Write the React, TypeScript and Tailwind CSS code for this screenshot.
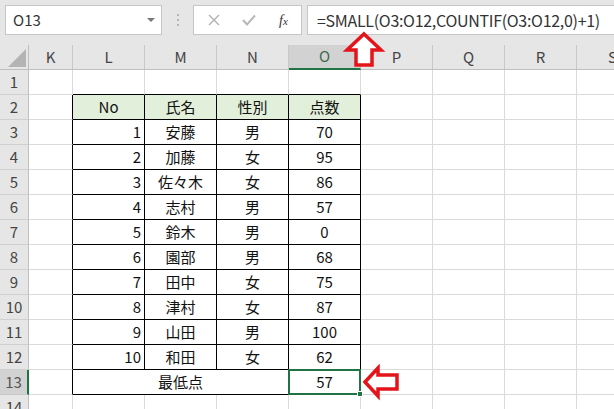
import React from "react";

const COLS = ["K", "L", "M", "N", "O", "P", "Q", "R", "S"];
const GRID = "grid grid-cols-[29px_44px_72px_72px_72px_72px_72px_72px_72px_72px]";

const DATA: [number, string, string, number][] = [
  [1, "安藤", "男", 70],
  [2, "加藤", "女", 95],
  [3, "佐々木", "女", 86],
  [4, "志村", "男", 57],
  [5, "鈴木", "男", 0],
  [6, "園部", "男", 68],
  [7, "田中", "女", 75],
  [8, "津村", "女", 87],
  [9, "山田", "男", 100],
  [10, "和田", "女", 62],
];

function borderCls(r: number, ci: number) {
  const rightBlack = r >= 2 && r <= 13 && ci >= 0 && ci <= 4;
  const bottomBlack = r >= 1 && r <= 13 && ci >= 1 && ci <= 4;
  return (
    "border-r border-b " +
    (rightBlack ? "border-r-black " : "border-r-[#dadada] ") +
    (bottomBlack ? "border-b-black" : "border-b-[#dadada]")
  );
}

function RowHeader({ n, sel }: { n: number; sel?: boolean }) {
  return (
    <div
      className={
        sel
          ? "flex items-center justify-center bg-[#d2d2d2] border-r-2 border-r-[#217346] border-b border-b-[#c8c8c8] text-[#555] text-[15px]"
          : "flex items-center justify-center bg-[#e6e6e6] border-r border-r-[#bfbfbf] border-b border-b-[#d0d0d0] text-[#444] text-[15px]"
      }
    >
      {n}
    </div>
  );
}

function Row({ r, cells }: { r: number; cells: (React.ReactNode | null)[] }) {
  return (
    <div className={GRID + " h-[25px]"}>
      <RowHeader n={r} />
      {COLS.map((c, ci) => (
        <div key={c} className={borderCls(r, ci) + " flex items-center text-[15px] text-[#111] overflow-hidden"}>
          {cells[ci] ?? null}
        </div>
      ))}
    </div>
  );
}

export default function App() {
  return (
    <div
      className="relative w-[614px] h-[409px] overflow-hidden bg-white"
      style={{ fontFamily: '"Noto Sans CJK JP", "Noto Sans", sans-serif' }}
    >
      {/* formula bar */}
      <div className="h-[45px] bg-[#e6e6e6] flex items-start pt-[5px] pl-[5px]">
        <div className="shrink-0 w-[157px] h-[30px] bg-white border border-[#c6c6c6] flex items-center justify-between pl-[7px] pr-[6px] text-[15px] text-[#333]">
          <span>O13</span>
          <svg width="8" height="5" viewBox="0 0 8 5">
            <polygon points="0,0 8,0 4,4" fill="#777" />
          </svg>
        </div>
        <div className="shrink-0 w-[31px] h-[30px] flex flex-col items-center justify-center gap-[3px]">
          <span className="w-[2px] h-[2px] bg-[#b5b5b5]" />
          <span className="w-[2px] h-[2px] bg-[#b5b5b5]" />
          <span className="w-[2px] h-[2px] bg-[#b5b5b5]" />
        </div>
        <div className="shrink-0 w-[109px] h-[30px] bg-white border border-[#c6c6c6] flex items-center pl-[2px]">
          <span className="w-[36px] flex justify-center">
            <svg width="12" height="12" viewBox="0 0 12 12">
              <path d="M1 1 L11 11 M11 1 L1 11" stroke="#b0b0b0" strokeWidth="1.4" />
            </svg>
          </span>
          <span className="w-[36px] flex justify-center">
            <svg width="14" height="12" viewBox="0 0 14 12">
              <path d="M1 6 L5 10.5 L13 1.5" stroke="#b8b8b8" strokeWidth="2" fill="none" />
            </svg>
          </span>
          <span
            className="w-[36px] flex justify-center italic text-[14px] text-[#333]"
            style={{ fontFamily: '"Liberation Serif", serif' }}
          >
            f<span className="text-[11px] mt-[3px]">x</span>
          </span>
        </div>
        <div className="ml-[5px] min-w-0 flex-1 h-[30px] bg-white border border-r-0 border-[#c6c6c6] flex items-center pl-[9px] text-[16px] tracking-[-0.3px] text-[#333] whitespace-nowrap overflow-hidden">
          =SMALL(O3:O12,COUNTIF(O3:O12,0)+1)
        </div>
      </div>

      {/* column headers */}
      <div className={GRID + " h-[25px] bg-[#e6e6e6]"}>
        <div className="relative border-r border-r-[#bfbfbf] border-b border-b-[#bfbfbf]">
          <svg className="absolute left-[8px] top-[4px]" width="18" height="18" viewBox="0 0 18 18">
            <polygon points="18,0 18,18 0,18" fill="#b4b4b4" />
          </svg>
        </div>
        {COLS.map((c) =>
          c === "O" ? (
            <div
              key={c}
              className="flex items-center justify-center bg-[#d2d2d2] border-r border-r-[#bfbfbf] border-b-2 border-b-[#217346] text-[15px] text-[#3d6b4f]"
            >
              {c}
            </div>
          ) : (
            <div
              key={c}
              className="flex items-center justify-center border-r border-r-[#c8c8c8] border-b border-b-[#bfbfbf] text-[15px] text-[#444]"
            >
              {c}
            </div>
          )
        )}
      </div>

      {/* rows */}
      <Row r={1} cells={[]} />
      <div className={GRID + " h-[25px]"}>
        <RowHeader n={2} />
        {COLS.map((c, ci) => {
          const labels: Record<string, string> = { L: "No", M: "氏名", N: "性別", O: "点数" };
          const lab = labels[c];
          return (
            <div
              key={c}
              className={
                borderCls(2, ci) +
                (lab ? " bg-[#e2efda]" : "") +
                " flex items-center justify-center text-[15px] text-[#111]"
              }
            >
              {lab ?? null}
            </div>
          );
        })}
      </div>
      {DATA.map(([no, name, sex, score], i) => (
        <Row
          key={no}
          r={i + 3}
          cells={[
            null,
            <span className="w-full text-right pr-[3px]">{no}</span>,
            <span className="w-full text-center">{name}</span>,
            <span className="w-full text-center">{sex}</span>,
            <span className="w-full text-center">{score}</span>,
          ]}
        />
      ))}
      {/* row 13 */}
      <div className="grid grid-cols-[29px_44px_216px_72px_72px_72px_72px_72px] h-[25px]">
        <RowHeader n={13} sel />
        <div className="border-r border-b border-r-black border-b-[#dadada]" />
        <div className="border-r border-b border-r-black border-b-black flex items-center justify-center text-[15px] text-[#111]">
          最低点
        </div>
        <div className="relative border-r border-b border-r-black border-b-black flex items-center justify-center text-[15px] text-[#111]">
          57
          <div className="absolute -left-[1px] -top-[1px] -right-[1px] -bottom-[1px] border-2 border-[#217346]" />
          <div className="absolute -right-[3px] -bottom-[3px] w-[6px] h-[6px] bg-[#217346] border border-white" />
        </div>
        <div className="border-r border-b border-r-[#dadada] border-b-[#dadada]" />
        <div className="border-r border-b border-r-[#dadada] border-b-[#dadada]" />
        <div className="border-r border-b border-r-[#dadada] border-b-[#dadada]" />
        <div className="border-r border-b border-r-[#dadada] border-b-[#dadada]" />
      </div>
      <Row r={14} cells={[]} />

      {/* annotation arrows */}
      <svg className="absolute inset-0 pointer-events-none" width="614" height="409" viewBox="0 0 614 409">
        <polygon
          points="364,34 381,50 372,50 372,65 356,65 356,50 347,50"
          fill="white"
          stroke="#e4141b"
          strokeWidth="3.5"
          strokeLinejoin="miter"
        />
        <polygon
          points="365,382 378,368 378,375 397,375 397,389 378,389 378,396"
          fill="white"
          stroke="#e4141b"
          strokeWidth="3.5"
          strokeLinejoin="miter"
        />
      </svg>
    </div>
  );
}
